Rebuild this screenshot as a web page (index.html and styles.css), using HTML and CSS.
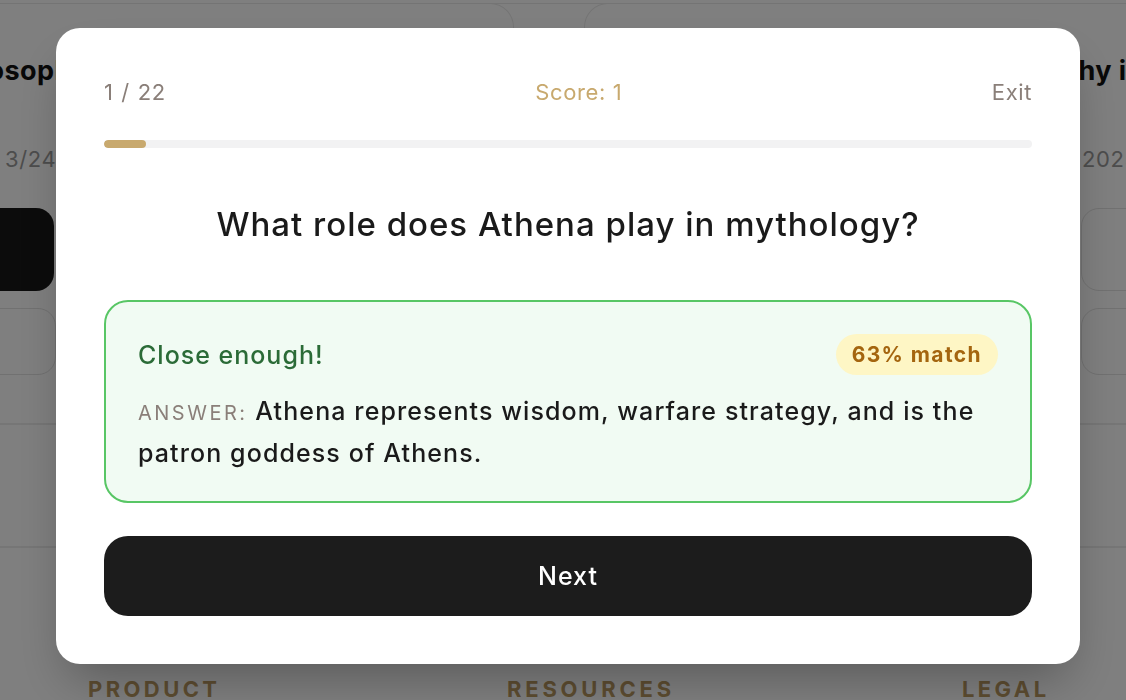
FILE: index.html
```html
<!DOCTYPE html>
<html lang="en">
<head>
<meta charset="utf-8">
<title>Quiz</title>
<link rel="stylesheet" href="styles.css">
</head>
<body>
<div class="page">
  <div class="topbar"></div>
  <div class="cards">
    <div class="card card-left">
      <div class="card-title">Philosophy of Mind</div>
      <div class="card-date">3/24/2025</div>
      <div class="btn-dark"></div>
      <div class="btn-outline"></div>
    </div>
    <div class="card card-right">
      <div class="card-title title-right">Greek Philosophy in Practice</div>
      <div class="card-date date-right">2025</div>
      <div class="btn-outline big"></div>
      <div class="btn-outline"></div>
    </div>
  </div>
  <div class="section"></div>
  <footer class="footer">
    <div class="foot-col">PRODUCT</div>
    <div class="foot-col">RESOURCES</div>
    <div class="foot-col">LEGAL</div>
  </footer>
</div>

<div class="overlay">
  <div class="modal">
    <div class="modal-head">
      <span class="count">1 / 22</span>
      <span class="score">Score: 1</span>
      <span class="exit">Exit</span>
    </div>
    <div class="progress"><div class="progress-fill" style="width: 4.55%"></div></div>
    <h2 class="question">What role does Athena play in mythology?</h2>
    <div class="feedback">
      <div class="feedback-head">
        <span class="verdict">Close enough!</span>
        <span class="badge">63% match</span>
      </div>
      <p class="answer"><span class="answer-label">ANSWER:</span> Athena represents wisdom, warfare strategy, and is the patron goddess of Athens.</p>
    </div>
    <button class="next">Next</button>
  </div>
</div>
</body>
</html>
```

FILE: styles.css
```css
* { box-sizing: border-box; }
html, body {
  margin: 0;
  width: 1126px;
  height: 700px;
  overflow: hidden;
  background: #ffffff;
  font-family: Inter, "Liberation Sans", sans-serif;
}

.page { width: 1126px; }

.topbar {
  height: 4px;
  border-bottom: 1px solid #e8e8e8;
  background: #fff;
}

.cards {
  display: flex;
  gap: 70px;
  margin-left: -86px;
  margin-top: -1px;
}

.card {
  flex-shrink: 0;
  border: 1px solid #e9e9e9;
  border-radius: 24px 24px 0 0;
  border-bottom: 2px solid #ececec;
  height: 422px;
  display: flex;
  flex-direction: column;
  align-items: flex-start;
}
.card-left { width: 600px; padding: 49px 0 0 22px; }
.card-right { width: 640px; padding: 49px 0 0 24px; }

.card-title {
  font-weight: 700;
  font-size: 27px;
  line-height: 36px;
  color: #111;
  white-space: nowrap;
  letter-spacing: 0.4px;
}
.card-date {
  margin-top: 55px;
  font-size: 22px;
  line-height: 30px;
  color: #9a9a9a;
  white-space: nowrap;
  letter-spacing: 0.6px;
}
.card-left .card-date { margin-left: 68px; }
.title-right { margin-left: 265px; }
.date-right { margin-left: 473px; }

.btn-dark {
  margin-top: 34px;
  width: 117px;
  height: 83px;
  border-radius: 18px;
  background: #181818;
}
.btn-outline {
  margin-top: 17px;
  width: 119px;
  height: 67px;
  border-radius: 18px;
  border: 1px solid #e2e2e2;
}
.card-right .btn-outline { margin-left: 472px; width: 200px; }
.card-right .btn-outline.big { margin-top: 34px; height: 83px; }

.section {
  height: 123px;
  border-bottom: 2px solid #ececec;
}

.footer {
  display: flex;
  padding: 128px 0 0 88px;
}
.foot-col {
  font-size: 22px;
  font-weight: 700;
  letter-spacing: 3.4px;
  color: #bb9a62;
  line-height: 26px;
}
.foot-col:nth-child(1) { width: 419px; }
.foot-col:nth-child(2) { width: 455px; letter-spacing: 3.8px; }

/* overlay + modal */
.overlay {
  position: fixed;
  top: 0;
  left: 0;
  width: 1126px;
  height: 700px;
  background: rgba(0, 0, 0, 0.5);
  display: flex;
  justify-content: flex-start;
  align-items: flex-start;
  padding: 28px 0 0 56px;
}

.modal {
  width: 1024px;
  height: 636px;
  background: #fff;
  border-radius: 24px;
  padding: 48px 48px;
  box-shadow: 0 25px 50px -12px rgba(0, 0, 0, 0.3);
  display: flex;
  flex-direction: column;
}

.modal-head {
  display: flex;
  justify-content: space-between;
  align-items: center;
  height: 32px;
  font-size: 22px;
  line-height: 32px;
  letter-spacing: 0.6px;
  flex-shrink: 0;
}
.count { color: #8a7f79; word-spacing: 1px; }
.score { color: #c8a96e; }
.exit { color: #8a7f79; }

.progress {
  flex-shrink: 0;
  margin-top: 32px;
  height: 8px;
  border-radius: 4px;
  background: #f2f2f3;
  overflow: hidden;
}
.progress-fill {
  height: 100%;
  background: #c8a96e;
  border-radius: 4px;
}

.question {
  flex-shrink: 0;
  margin: 56px 0 0;
  text-align: center;
  font-size: 33px;
  line-height: 40px;
  font-weight: 500;
  letter-spacing: 1px;
  color: #1a1a1a;
}

.feedback {
  flex-shrink: 0;
  margin-top: 56px;
  border: 2px solid #58c665;
  background: #f1fbf3;
  border-radius: 24px;
  padding: 32px 32px 28px;
}
.feedback-head {
  display: flex;
  justify-content: space-between;
  align-items: center;
  height: 41px;
}
.verdict {
  font-size: 25px;
  color: #2b6b37;
  font-weight: 500;
  letter-spacing: 1px;
}
.badge {
  background: #fef6c5;
  color: #a4650f;
  font-weight: 700;
  font-size: 21px;
  line-height: 41px;
  padding: 0 16px;
  letter-spacing: 1.4px;
  border-radius: 21px;
}
.answer {
  margin: 16px 0 0;
  font-size: 25px;
  line-height: 40px;
  color: #1a1a1a;
  font-weight: 500;
  letter-spacing: 1.1px;
}
.answer-label {
  font-size: 20px;
  color: #8a7f79;
  font-weight: 400;
  letter-spacing: 2.5px;
}

.next {
  flex-shrink: 0;
  margin-top: 33px;
  height: 80px;
  border: 0;
  border-radius: 24px;
  background: #1c1c1c;
  color: #fff;
  font-family: inherit;
  font-size: 25px;
  font-weight: 500;
  letter-spacing: 1px;
}
```
